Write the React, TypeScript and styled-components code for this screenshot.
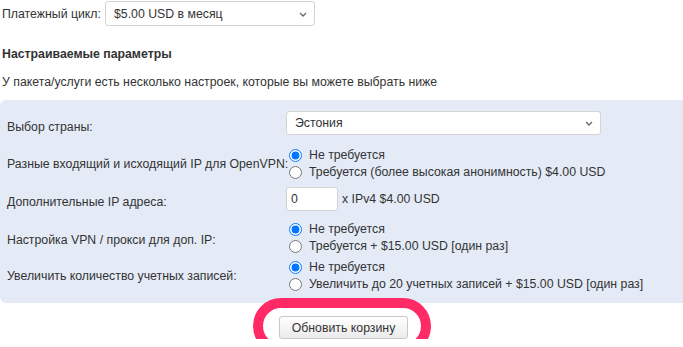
import React from 'react';
import styled, { createGlobalStyle } from 'styled-components';

const GlobalStyle = createGlobalStyle`
  html, body {
    margin: 0;
    padding: 0;
    background: #fff;
    overflow: hidden;
  }
  body {
    font-family: 'Liberation Sans', Arial, sans-serif;
    font-size: 12.3px;
    color: #333;
  }
`;

const Page = styled.div`
  width: 683px;
`;

const Top = styled.div`
  padding: 1px 0 0 2px;
`;

const CycleRow = styled.div`
  display: flex;
  align-items: center;
  gap: 4px;
`;

const Heading = styled.div`
  font-weight: bold;
  line-height: 15px;
  margin-top: 21px;
`;

const Note = styled.div`
  line-height: 15px;
  margin-top: 13px;
  margin-bottom: 10px;
`;

interface ISelect {
  width: string;
  height: string;
}

const SelectWrap = styled.div<ISelect>`
  position: relative;
  width: ${props => props.width};
  height: ${props => props.height};
`;

const Select = styled.select`
  appearance: none;
  width: 100%;
  height: 100%;
  box-sizing: border-box;
  border: 1px solid #d4d4d4;
  border-radius: 3px;
  background: #fff;
  padding: 0 0 0 8px;
  font-family: 'Liberation Sans', Arial, sans-serif;
  font-size: 12.3px;
  color: #333;
  outline: none;
`;

const Chevron = styled.svg`
  position: absolute;
  right: 8px;
  top: 50%;
  margin-top: -2px;
  pointer-events: none;
`;

const Panel = styled.div`
  background: #e4ebf7;
  border-radius: 6px;
  margin-right: -20px;
  padding-left: 7px;
`;

interface IRow {
  pad: string;
}

const Row = styled.div<IRow>`
  display: grid;
  grid-template-columns: 279px 1fr;
  align-items: center;
  padding: ${props => props.pad};
`;

interface ILabel {
  drop?: string;
}

const Label = styled.div<ILabel>`
  line-height: 15px;
  white-space: nowrap;
  padding-top: ${props => props.drop || '0'};
`;

const Options = styled.div`
  display: flex;
  flex-direction: column;
`;

const Option = styled.label`
  display: flex;
  align-items: center;
  height: 17px;
  line-height: 15px;
  white-space: nowrap;

  input {
    width: 13px;
    height: 13px;
    margin: 0 7px 0 3px;
  }
`;

const Inline = styled.div`
  display: flex;
  align-items: center;
  gap: 4px;
`;

const NumberInput = styled.input`
  width: 52px;
  height: 24px;
  box-sizing: border-box;
  border: 1px solid #d4d4d4;
  border-radius: 3px;
  padding: 0 4px;
  font-family: 'Liberation Sans', Arial, sans-serif;
  font-size: 12.3px;
  color: #333;
  outline: none;
`;

const Actions = styled.div`
  display: flex;
  justify-content: center;
  padding: 13px 0 0 4px;
`;

const Highlight = styled.div`
  position: relative;
`;

const Ring = styled.div`
  position: absolute;
  left: -26px;
  top: -18px;
  width: 178px;
  height: 56px;
  box-sizing: border-box;
  border: 10px solid #ff2a66;
  border-radius: 28px;
  pointer-events: none;
`;

const Button = styled.button`
  height: 23px;
  width: 129px;
  padding: 0;
  white-space: nowrap;
  border: 1px solid #c8c8c8;
  border-radius: 3px;
  background: linear-gradient(#ffffff, #ebebeb);
  font-family: 'Liberation Sans', Arial, sans-serif;
  font-size: 12.3px;
  color: #333;
`;

const SelectBox = ({ value, width, height }: { value: string; width: string; height: string }) => (
  <SelectWrap width={width} height={height}>
    <Select defaultValue={value}>
      <option>{value}</option>
    </Select>
    <Chevron width="8" height="5" viewBox="0 0 8 5">
      <path d="M1 1l3 3 3-3" fill="none" stroke="#666" strokeWidth="1.3" />
    </Chevron>
  </SelectWrap>
);

const RadioGroup = ({ name, items }: { name: string; items: string[] }) => (
  <Options>
    {items.map((item, i) => (
      <Option key={item}>
        <input type="radio" name={name} defaultChecked={i === 0} />
        {item}
      </Option>
    ))}
  </Options>
);

const App = () => {
  return (
    <Page>
      <GlobalStyle />
      <Top>
        <CycleRow>
          <span>Платежный цикл:</span>
          <SelectBox value="$5.00 USD в месяц" width="210px" height="25px" />
        </CycleRow>
        <Heading>Настраиваемые параметры</Heading>
        <Note>У пакета/услуги есть несколько настроек, которые вы можете выбрать ниже</Note>
      </Top>
      <Panel>
        <Row pad="11px 0 6px">
          <Label drop="9px">Выбор страны:</Label>
          <SelectBox value="Эстония" width="315px" height="24px" />
        </Row>
        <Row pad="6px 0 2px">
          <Label>Разные входящий и исходящий IP для OpenVPN:</Label>
          <RadioGroup
            name="openvpn"
            items={['Не требуется', 'Требуется (более высокая анонимность) $4.00 USD']}
          />
        </Row>
        <Row pad="4px 0 4px">
          <Label drop="6px">Дополнительные IP адреса:</Label>
          <Inline>
            <NumberInput defaultValue="0" />
            <span>x IPv4 $4.00 USD</span>
          </Inline>
        </Row>
        <Row pad="6px 0 2px">
          <Label drop="5px">Настройка VPN / прокси для доп. IP:</Label>
          <RadioGroup
            name="setup"
            items={['Не требуется', 'Требуется + $15.00 USD [один раз]']}
          />
        </Row>
        <Row pad="2px 0 10px">
          <Label>Увеличить количество учетных записей:</Label>
          <RadioGroup
            name="accounts"
            items={['Не требуется', 'Увеличить до 20 учетных записей + $15.00 USD [один раз]']}
          />
        </Row>
      </Panel>
      <Actions>
        <Highlight>
          <Button>Обновить корзину</Button>
          <Ring />
        </Highlight>
      </Actions>
    </Page>
  );
};

export default App;
